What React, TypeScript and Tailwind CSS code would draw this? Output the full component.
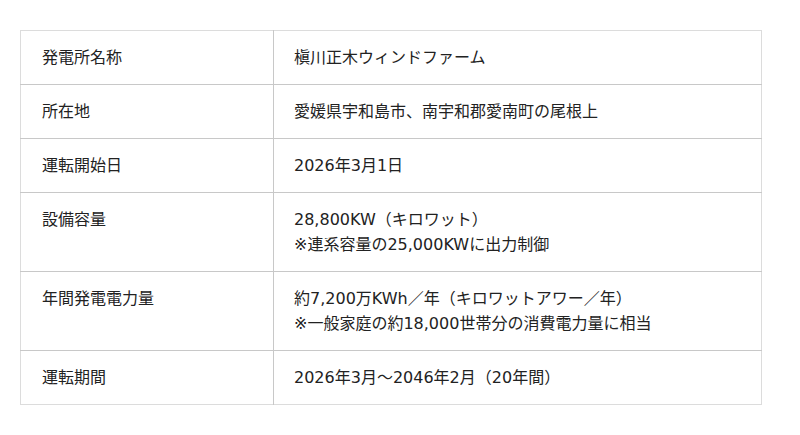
const rows: { label: string; lines: string[] }[] = [
  { label: '発電所名称', lines: ['槇川正木ウィンドファーム'] },
  { label: '所在地', lines: ['愛媛県宇和島市、南宇和郡愛南町の尾根上'] },
  { label: '運転開始日', lines: ['2026年3月1日'] },
  { label: '設備容量', lines: ['28,800KW（キロワット）', '※連系容量の25,000KWに出力制御'] },
  { label: '年間発電電力量', lines: ['約7,200万KWh／年（キロワットアワー／年）', '※一般家庭の約18,000世帯分の消費電力量に相当'] },
  { label: '運転期間', lines: ['2026年3月～2046年2月（20年間）'] },
];

export default function App() {
  return (
    <div className="w-[800px] h-[435px] bg-white pt-[30px] pl-[20px] font-[family-name:DejaVu_Sans,Noto_Sans_CJK_JP,sans-serif] text-[16px] leading-[25px] text-[#222]">
      <table className="w-[742px] border-collapse border border-[#dcdcdc]">
        <tbody>
          {rows.map((row, i) => (
            <tr key={i} className="border-b border-[#c8c8c8] last:border-[#dcdcdc]">
              <td className="w-[253px] align-top pl-[21px] pr-2 py-[14px] border-r border-[#c8c8c8]">{row.label}</td>
              <td className="align-top pl-[20px] pr-2 py-[14px]">
                {row.lines.map((line, j) => (<div key={j}>{line}</div>))}
              </td>
            </tr>
          ))}
        </tbody>
      </table>
    </div>
  );
}
